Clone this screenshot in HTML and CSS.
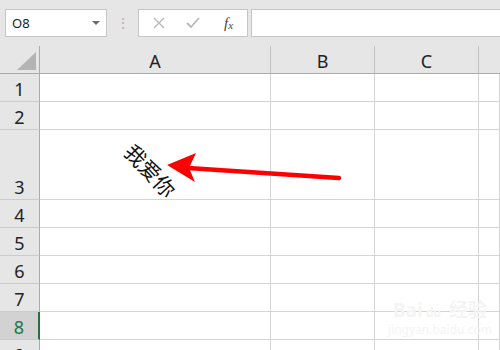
FILE: index.html
```html
<!DOCTYPE html>
<html>
<head>
  <link rel="stylesheet" href="styles.css">
</head>
<body>
  <div class="toolbar">
    <div class="name-box">
      <span>O8</span>
      <svg class="caret" width="8" height="4" viewBox="0 0 8 4"><polygon points="0,0 8,0 4,4" fill="#6d6d6d"/></svg>
    </div>
    <div class="grip">⋮</div>
    <div class="fx-buttons">
      <svg width="12" height="12" viewBox="0 0 12 12"><path d="M1 1 L11 11 M11 1 L1 11" stroke="#b9b9b9" stroke-width="1.4"/></svg>
      <svg width="14" height="12" viewBox="0 0 14 12"><path d="M1 6 L5 10 L13 1" stroke="#b9b9b9" stroke-width="1.8" fill="none"/></svg>
      <span class="fx">f<sub>x</sub></span>
    </div>
    <div class="formula-input"></div>
  </div>

  <div class="sheet">
    <div class="corner"><svg width="19" height="18" viewBox="0 0 19 18"><polygon points="0,18 19,0 19,18" fill="#b4b4b4"/></svg></div>
    <div class="col-head">A</div>
    <div class="col-head">B</div>
    <div class="col-head">C</div>
    <div class="col-head last"></div>

    <div class="row-head">1</div><div class="cell"></div><div class="cell"></div><div class="cell"></div><div class="cell"></div>
    <div class="row-head">2</div><div class="cell"></div><div class="cell"></div><div class="cell"></div><div class="cell"></div>
    <div class="row-head tall">3</div>
    <div class="cell text-cell"><span class="slanted">我爱你</span></div>
    <div class="cell"></div><div class="cell"></div><div class="cell"></div>
    <div class="row-head">4</div><div class="cell"></div><div class="cell"></div><div class="cell"></div><div class="cell"></div>
    <div class="row-head">5</div><div class="cell"></div><div class="cell"></div><div class="cell"></div><div class="cell"></div>
    <div class="row-head">6</div><div class="cell"></div><div class="cell"></div><div class="cell"></div><div class="cell"></div>
    <div class="row-head">7</div><div class="cell"></div><div class="cell"></div><div class="cell"></div><div class="cell"></div>
    <div class="row-head active">8</div><div class="cell"></div><div class="cell"></div><div class="cell"></div><div class="cell"></div>
    <div class="row-head">9</div><div class="cell"></div><div class="cell"></div><div class="cell"></div><div class="cell"></div>
  </div>

  <div class="watermark">
    <div class="wm-logo">Bai<span class="paw">du</span> 经验</div>
    <div class="wm-url">jingyan.baidu.com</div>
  </div>

  <!-- red arrow drawn over the sheet -->
  <svg class="arrow" width="500" height="350" viewBox="0 0 500 350">
    <line x1="339" y1="178" x2="188" y2="168" stroke="#f00" stroke-width="4.5" stroke-linecap="round"/>
    <polygon points="167,165 196,153 189,168 195,182" fill="#f00"/>
  </svg>
</body>
</html>
```

FILE: styles.css
```css
body {
  margin: 0;
  width: 500px;
  height: 350px;
  overflow: hidden;
  background-color: #fff;
  font-family: "Noto Sans", "Noto Sans CJK SC", sans-serif;
}

.toolbar {
  height: 46px;
  background-color: #e6e6e6;
  display: flex;
  align-items: flex-start;
  padding-top: 9px;
  box-sizing: border-box;
}

.name-box {
  margin-left: 5px;
  width: 102px;
  height: 28px;
  box-sizing: border-box;
  background-color: #fff;
  border: 1px solid #c6c6c6;
  display: flex;
  align-items: center;
  justify-content: space-between;
  padding: 0 6px 0 6px;
  font-size: 13px;
  color: #222;
}

.grip {
  width: 31px;
  text-align: center;
  color: #b4b4b4;
  font-size: 14px;
  line-height: 28px;
}

.fx-buttons {
  width: 110px;
  height: 28px;
  box-sizing: border-box;
  background-color: #fff;
  border: 1px solid #c6c6c6;
  display: flex;
  align-items: center;
  padding-left: 14px;
  gap: 21px;
}

.fx {
  font-family: "Liberation Serif", serif;
  font-style: italic;
  font-size: 15px;
  color: #444;
  margin-left: 3px;
}

.fx sub {
  font-size: 11px;
  vertical-align: -1px;
}

.formula-input {
  flex: 1;
  margin-left: 3px;
  height: 28px;
  box-sizing: border-box;
  background-color: #fff;
  border: 1px solid #c6c6c6;
  border-right: none;
}

.sheet {
  display: grid;
  grid-template-columns: 40px 231px 104px 104px 1fr;
  grid-template-rows: 28px 28px 28px 70px repeat(6, 28px);
}

.corner,
.col-head {
  background-color: #e6e6e6;
  border-bottom: 1px solid #ababab;
  box-sizing: border-box;
}

.corner {
  border-right: 1px solid #ababab;
  display: flex;
  justify-content: flex-end;
  align-items: flex-end;
  padding: 0 3px 3px 0;
}

.col-head {
  display: flex;
  align-items: center;
  justify-content: center;
  padding-top: 3px;
  font-size: 18px;
  color: #222;
  border-right: 1px solid #c3c3c3;
  background-image: linear-gradient(#e6e6e6, #e6e6e6);
  background-size: 100% 1px;
  background-repeat: no-repeat;
}

.col-head.last {
  border-right: none;
}

.row-head {
  background-color: #e6e6e6;
  border-right: 1px solid #ababab;
  border-bottom: 1px solid #cbcbcb;
  box-sizing: border-box;
  display: flex;
  align-items: center;
  justify-content: center;
  padding-top: 3px;
  font-size: 18px;
  color: #222;
}

.row-head.tall {
  align-items: flex-end;
  padding-bottom: 0;
}

.row-head.active {
  background-color: #d2d2d2;
  color: #217346;
  border-right: 2px solid #217346;
}

.cell {
  border-right: 1px solid #d4d4d4;
  border-bottom: 1px solid #d4d4d4;
  box-sizing: border-box;
}

.text-cell {
  display: flex;
  align-items: center;
  padding-left: 79px;
  padding-top: 12px;
}

.slanted {
  display: inline-block;
  font-family: "Noto Sans CJK SC", sans-serif;
  font-size: 21px;
  line-height: 1;
  color: #111;
  transform: rotate(47deg);
}

.watermark {
  position: absolute;
  left: 388px;
  top: 300px;
  text-align: center;
  color: #f4f4f4;
  pointer-events: none;
}

.wm-logo {
  font-size: 19px;
  font-weight: bold;
  line-height: 20px;
}

.paw {
  font-size: 12px;
  margin: 0 3px;
}

.wm-url {
  font-size: 12px;
  line-height: 14px;
}

.arrow {
  position: absolute;
  left: 0;
  top: 0;
  pointer-events: none;
}
```
